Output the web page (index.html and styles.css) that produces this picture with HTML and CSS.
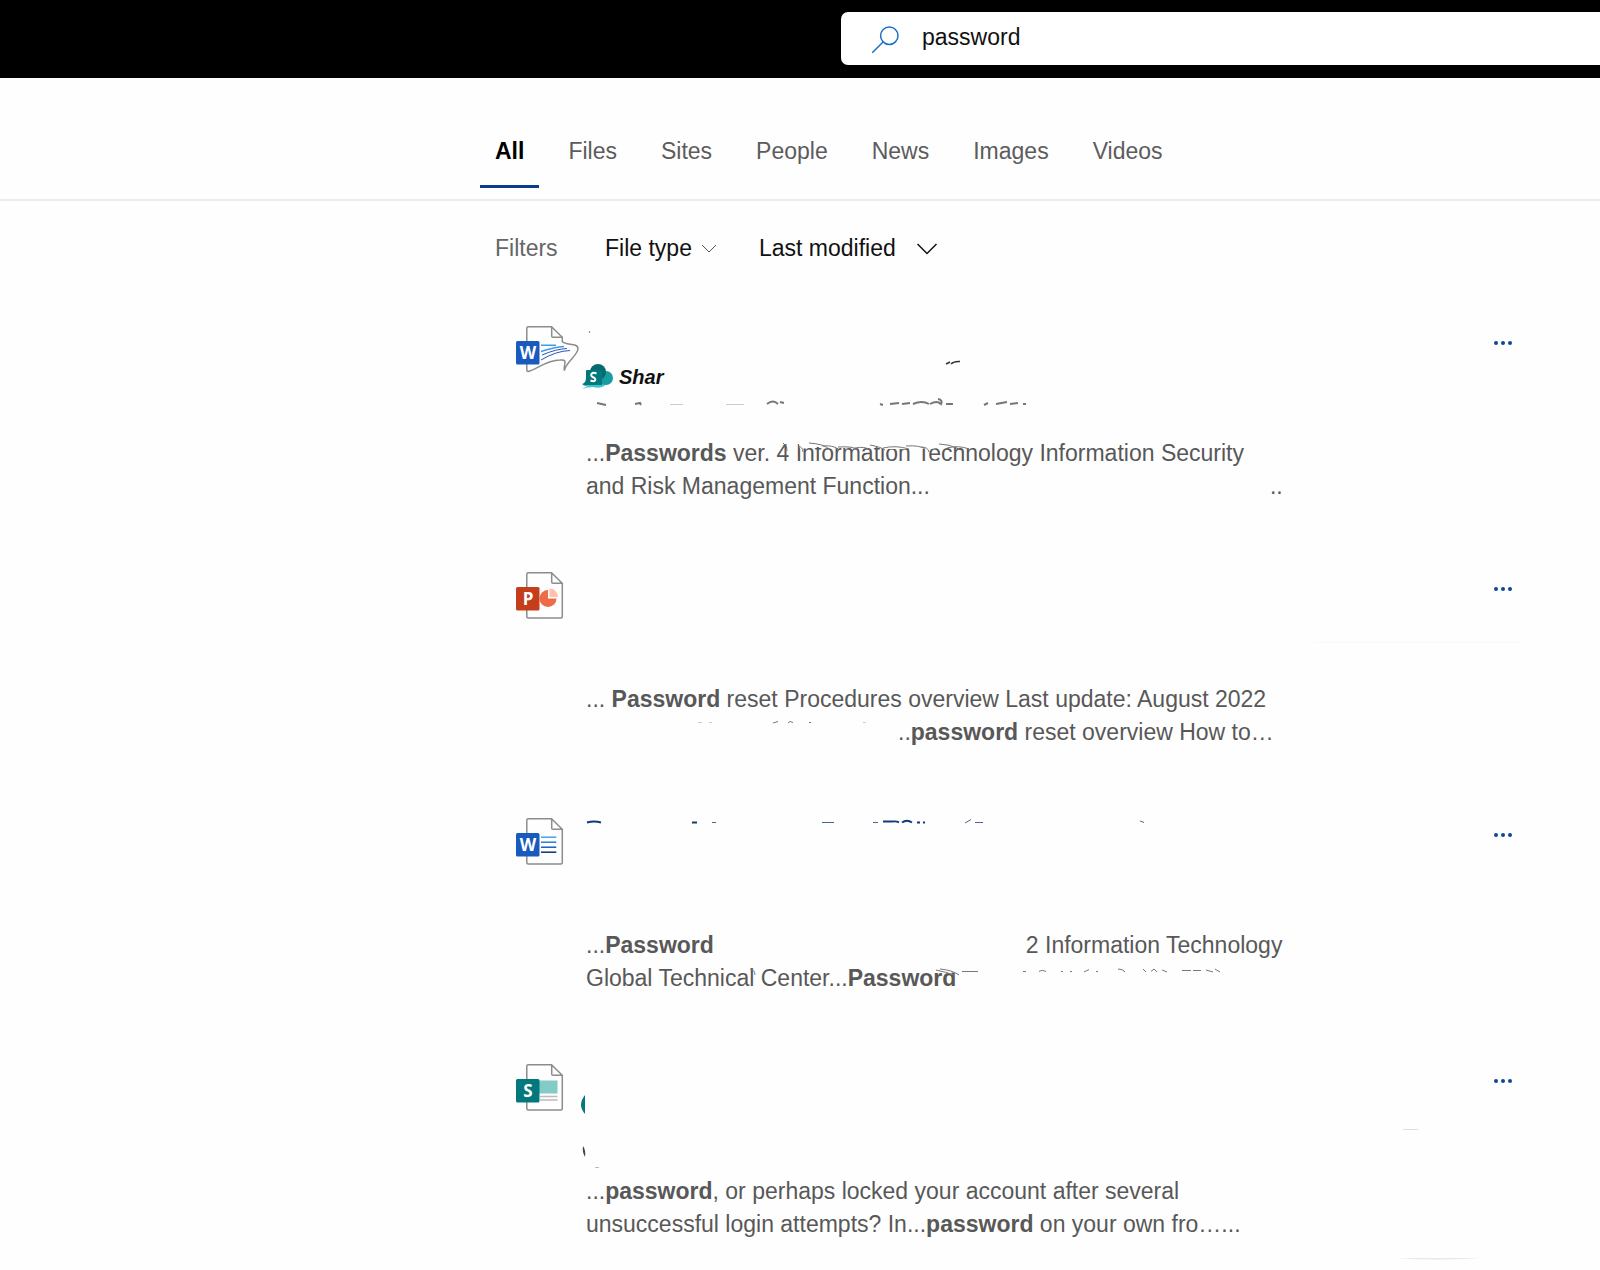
FILE: index.html
```html
<!DOCTYPE html>
<html lang="en">
<head>
<meta charset="utf-8">
<title>password - Search</title>
<link rel="stylesheet" href="styles.css">
</head>
<body>
<header class="topbar">
  <form class="search" role="search">
    <svg class="search-icon" viewBox="0 0 30 30" aria-hidden="true"><circle cx="18.300" cy="11.700" r="8.700"/><path d="M12 18 1.300 28.700"/></svg>
    <input class="search-input" type="text" value="password" aria-label="Search">
  </form>
</header>
<nav class="tabs" aria-label="Result types">
  <a class="tab tab-active" href="#all">All</a>
  <a class="tab" href="#files">Files</a>
  <a class="tab" href="#sites">Sites</a>
  <a class="tab" href="#people">People</a>
  <a class="tab" href="#news">News</a>
  <a class="tab" href="#images">Images</a>
  <a class="tab" href="#videos">Videos</a>
</nav>
<section class="filters">
  <span class="filters-label">Filters</span>
  <button class="filter" type="button">File type <svg class="chevron-small" viewBox="0 0 16 10"><path d="M1 1l7 7 7-7"/></svg></button>
  <button class="filter filter-wide" type="button">Last modified <svg class="chevron" viewBox="0 0 22 12"><path d="M1.500 1l9.500 9.500L20.500 1"/></svg></button>
</section>
<main class="results">
  <article class="result">
    <svg class="doc" viewBox="0 0 48 47" aria-hidden="true">
      <path class="page" d="M10.800 15V2.200q0-1.500 1.500-1.500H35.500L46.300 11.300V15.500C50 20 62 16 62 23C61 30 50 36 48.300 44.500C47 39 53 33 44 34C30 34 20 44 12 45.500q-1.200 0-1.200-1.500V38"/>
      <path class="page" d="M35.700.7V10q0 1.300 1.300 1.300h9.300"/>
      <path stroke="#3f9be8" stroke-width="1.500" fill="none" d="M25 19.200H40M25 25.500Q39 21 48 20.500"/><path stroke="#2954b8" d="M26 29Q40 23 51 22.500M25 34Q40 25 54 24.500" fill="none"/>
      <rect y="15" width="23.500" height="23.500" rx="1.500" fill="#185abd"/><text class="letter" x="12" y="33">W</text>
    </svg>
    <div class="body">
      <div class="source">
        <svg class="sp-logo" viewBox="0 0 32 26" aria-hidden="true"><path fill="#37c6d0" d="M0 25Q8 21 12 17H26Q22 26 11 23Q5 23 0 25Z"/><circle cx="24" cy="14" r="7" fill="#1a9ba1"/><circle cx="16" cy="8" r="8" fill="#036c70"/><path fill="#03787c" d="M5 6H18q2 0 2 2V21H7Q3 23 0 20Q4 19 4 14V7q0-1 1-1Z"/><path d="M14.500 9.500C10 7.500 7.500 11 10.500 13C15 14.500 14 18.500 8.500 16.500" fill="none" stroke="#fff" stroke-width="2"/></svg>
        <b class="source-name">Shar</b>
      </div>
      <p class="snippet">...<b>Passwords</b> ver. 4 Information Technology Information Security<br>and Risk Management Function...<span class="gap gap-dots"></span>..</p>
    </div>
    <button class="more" type="button" aria-label="More actions"><i></i><i></i><i></i></button>
    <svg class="traces" viewBox="0 0 1000 240" aria-hidden="true">
      <path fill="#fefefe" d="M282 120H450V127Q430 126 415 129H370L360 127H300L284 129Z"/>
      <path class="ink" d="M267 123Q272 126 271 131M282 126Q287 127 287 132M293 123Q308 124 313 129M306 126Q317 125 322 129M322 127Q338 126 342 130M339 128Q349 126 354 130M354 125Q365 127 369 130M367 128Q380 125 393 129M390 126Q404 125 409 129M405 127Q412 127 413 132M423 124Q433 124 443 129M431 128Q443 125 453 129"/>
      <path class="ink" stroke-width="2" d="M81 83L90 85M119 84L124 83L125 85M251 84Q257 79 262 84M264 82L268 83M364 84L367 85M374 84L383 83M386 84L394 83M397 84Q406 80 413 84M414 84Q421 80 425 84Q427 80 422 79M430 84H437M468 85L472 83M480 84L491 82M494 84L502 83M507 84H510"/>
      <path stroke="#ccc" d="M154 84.500H167M210 84.500H228"/>
      <path stroke="#333" stroke-width="1.500" d="M430 44L434 42M435 44Q438 41 444 41.500" fill="none"/><circle cx="73.500" cy="12" r=".8" fill="#568"/>
    </svg>
  </article>
  <article class="result">
    <svg class="doc" viewBox="0 0 48 47" aria-hidden="true">
      <path class="page" d="M12.300.7H35.500L46.300 11.300V44.500q0 1.500-1.500 1.500H12.300q-1.500 0-1.500-1.500V2.200q0-1.500 1.500-1.500ZM35.700.7V10q0 1.300 1.300 1.300h9.300"/>
      <path fill="#ed6c47" d="M32 18V26.500H40.500A8.500 8.500 0 1 1 32 18Z"/><path fill="#ffc1ae" d="M33.500 16.500V25H42A8.500 8.500 0 0 0 33.500 16.500Z"/>
      <rect y="15" width="23.500" height="23.500" rx="1.500" fill="#c43e1c"/><text class="letter" x="12" y="33">P</text>
    </svg>
    <div class="body">
      <p class="snippet">... <b>Password</b> reset Procedures overview Last update: August 2022<br><span class="gap gap-lead"></span>..<b>password</b> reset overview How to…</p>
    </div>
    <button class="more" type="button" aria-label="More actions"><i></i><i></i><i></i></button>
    <svg class="traces" viewBox="0 0 1000 240" aria-hidden="true">
      <path class="ink" d="M257 157L262 155.500M272 157L274 155.500 277 156.500M293 156.500H295"/><path stroke="#ccc" d="M182 156.500H186M193 156.500H196M347 156.500H350"/><path stroke="#f9f9f9" d="M798 76.500H1006"/>
    </svg>
  </article>
  <article class="result">
    <svg class="doc" viewBox="0 0 48 47" aria-hidden="true">
      <path class="page" d="M12.300.7H35.500L46.300 11.300V44.500q0 1.500-1.500 1.500H12.300q-1.500 0-1.500-1.500V2.200q0-1.500 1.500-1.500ZM35.700.7V10q0 1.300 1.300 1.300h9.300"/>
      <path stroke="#41a5ee" stroke-width="1.500" d="M25 19.200H40.300"/><path stroke="#2b7cd3" stroke-width="1.500" d="M25 24.200H40.300"/><path stroke="#185abd" stroke-width="1.500" d="M25 29.200H40.300"/><path stroke="#103070" stroke-width="1.500" d="M25 34.200H40.300"/>
      <rect y="15" width="23.500" height="23.500" rx="1.500" fill="#185abd"/><text class="letter" x="12" y="33">W</text>
    </svg>
    <div class="body">
      <p class="snippet">...<b>Password</b><span class="gap gap-middle"></span>2 Information Technology<br>Global Technical Center...<b>Password</b></p>
    </div>
    <button class="more" type="button" aria-label="More actions"><i></i><i></i><i></i></button>
    <svg class="traces" viewBox="0 0 1000 240" aria-hidden="true">
      <path class="title-ink" d="M71 10.500Q78 8.500 85 10.500M176 10.500H181M367 9.500H376Q381 9 383 10.500M386 10.500Q391 7 396 10.500M401 10.500H404M407 10.500H409"/>
      <path stroke="#4a6690" fill="none" d="M306 10.500H318M357 10.500H362M449 11L455 7.500M459 10.500H467M624 9L628 10.500M196 10.500H200"/>
      <path fill="#fefefe" d="M426 154H446V161L426 160Z"/>
      <path class="ink" d="M420 158Q430 160 438 163M424 157Q436 158 443 163M446 159.500H462M234 157Q239 158 239 163M507 159.500H510M523 159.500Q526 157 530 159.500M545 159.500H547M554 159.500H556M568 160L573 157.500M580 159.500H582M602 157Q607 157 609 160M627 157L630 160M635 159.500L638 157L641 160M646 158L651 160M666 158.500H675M677 158.500H685M690 158L697 160M699 157L704 160"/>
    </svg>
  </article>
  <article class="result">
    <svg class="doc" viewBox="0 0 48 47" aria-hidden="true">
      <path class="page" d="M12.300.7H35.500L46.300 11.300V44.500q0 1.500-1.500 1.500H12.300q-1.500 0-1.500-1.500V2.200q0-1.500 1.500-1.500ZM35.700.7V10q0 1.300 1.300 1.300h9.300"/>
      <path fill="#83cbc5" d="M23 16.500H41.500V29.500H23Z"/><path stroke="#bbb" stroke-width="1.300" d="M24 32.500H41.500M24 36H41.500"/>
      <rect y="15" width="23.500" height="23.500" rx="1.500" fill="#03787c"/><text class="letter" x="12" y="33">S</text>
    </svg>
    <div class="body">
      <p class="snippet">...<b>password</b>, or perhaps locked your account after several<br>unsuccessful login attempts? In...<b>password</b> on your own fro…...</p>
    </div>
    <button class="more" type="button" aria-label="More actions"><i></i><i></i><i></i></button>
    <svg class="traces" viewBox="0 0 1000 240" aria-hidden="true">
      <path fill="#03787c" d="M69 37V56Q61 47 69 37Z"/><path fill="#444" d="M67 88Q70 92 69 99Q66 94 67 88Z"/><path stroke="#bbb" d="M79 109.500H83"/><path stroke="#cde5e5" d="M887 71.500H902"/><path fill="#e8e8e8" d="M880 200H964Q922 203 880 200Z"/>
    </svg>
  </article>
</main>
</body>
</html>
```

FILE: styles.css
```css
* { box-sizing: border-box; }
body {
  margin: 0;
  background: #fefefe;
  color: #585858;
  font-family: "Liberation Sans", Arial, sans-serif;
  font-size: 23px;
  line-height: 33px;
  overflow-x: hidden;
}
.topbar { display: flex; padding: 12px 0 13px 841px; background: #000; }
.search {
  display: flex;
  flex: 1;
  align-items: center;
  gap: 21px;
  height: 53px;
  padding-left: 30px;
  background: #fff;
  border-radius: 7px 0 0 7px;
}
.search-icon { width: 30px; height: 30px; fill: none; stroke: #1a6fc4; stroke-width: 1.5; }
.search-input {
  flex: 1;
  min-width: 0;
  padding: 0 0 2px;
  border: 0;
  outline: 0;
  background: none;
  color: #111;
  font: inherit;
}
.tabs { display: flex; gap: 14px; padding: 57px 0 11px 480px; border-bottom: 2px solid #ebebeb; }
.tab { padding: 0 15px 17px; color: #5c5c5c; text-decoration: none; border-bottom: 3px solid transparent; }
.tab-active { color: #000; font-weight: bold; border-color: #0b3d8c; }
.filters { display: flex; align-items: center; padding: 31px 0 55px 495px; }
.filters-label { width: 110px; color: #666; }
.filter {
  display: flex;
  align-items: center;
  gap: 9px;
  margin-right: 42px;
  padding: 0;
  border: 0;
  background: none;
  color: #111;
  font: inherit;
}
.filter-wide { gap: 20px; }
.chevron-small { width: 16px; height: 10px; fill: none; stroke: #555; stroke-width: 1; }
.chevron { width: 22px; height: 12px; fill: none; stroke: #111; stroke-width: 1.5; }
.results { padding-left: 516px; }
.result {
  position: relative;
  display: grid;
  grid-template-columns: 66px minmax(0, 1fr) 106px;
  min-height: 246px;
}
.doc { width: 48px; height: 47px; margin-top: 6px; overflow: visible; }
.page { fill: none; stroke: #8c8c8c; stroke-width: 1.5; }
.letter { fill: #fff; font: bold 17px "Open Sans", sans-serif; text-anchor: middle; }
.body { display: flex; flex-direction: column; justify-content: flex-end; padding-bottom: 63px; }
.source { display: flex; align-items: center; gap: 5px; height: 26px; margin-bottom: 47px; }
.sp-logo { width: 32px; height: 26px; }
.source-name { color: #111; font-size: 20px; font-style: italic; line-height: 24px; }
.snippet { margin: 0; padding-left: 4px; white-space: nowrap; }
.gap { display: inline-block; }
.gap-dots { width: 340px; }
.gap-lead { width: 312px; }
.gap-middle { width: 312px; }
.more {
  display: flex;
  justify-content: space-between;
  align-items: center;
  width: 18px;
  height: 20px;
  margin-top: 13px;
  padding: 0;
  border: 0;
  background: none;
}
.more i { width: 4px; height: 4px; border-radius: 50%; background: #0b4a90; }
.traces { position: absolute; top: 0; left: 0; width: 1000px; height: 240px; overflow: visible; pointer-events: none; }
.ink { fill: none; stroke: #777; }
.title-ink { fill: none; stroke: #123a78; stroke-width: 2; }
```
